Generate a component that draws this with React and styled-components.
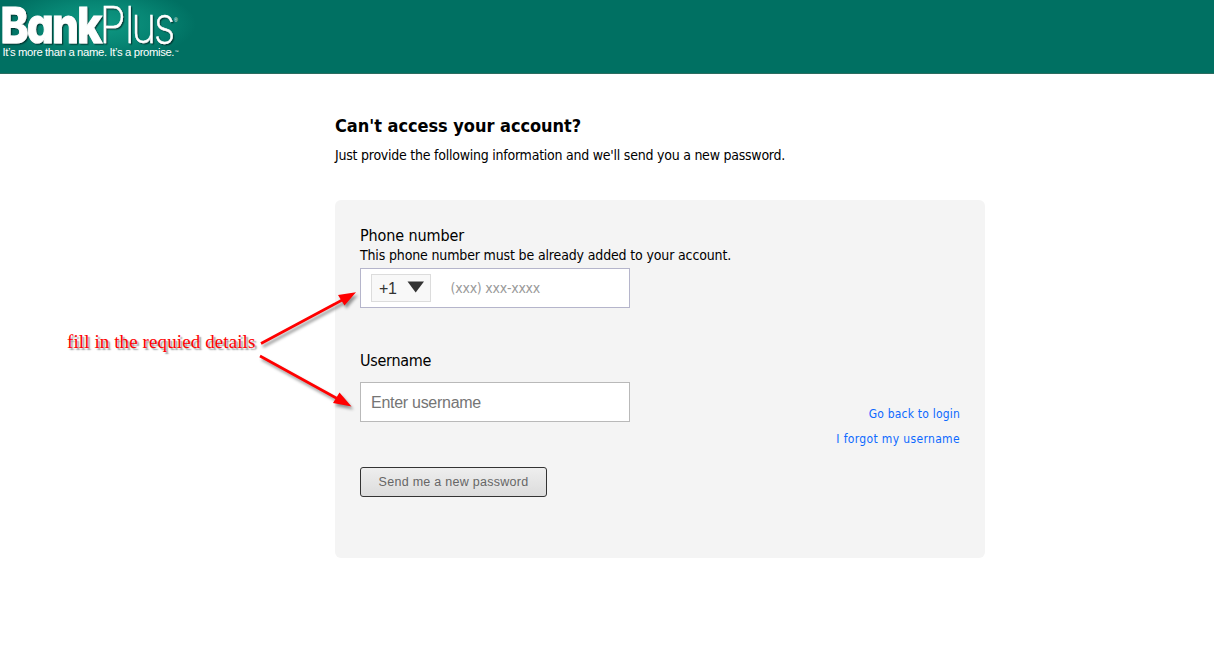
import React from "react";
import styled, { createGlobalStyle } from "styled-components";

const GlobalStyle = createGlobalStyle`
  * { box-sizing: border-box; }
  body { margin: 0; background: #fff; color: #000; font-family: "DejaVu Sans Condensed", "DejaVu Sans", sans-serif; font-stretch: condensed; }
`;

const Page = styled.div`position: relative; height: 666px; overflow: hidden;`;

const Header = styled.header`
  height: 74px;
  background: #007062;
  border-bottom: 1px solid #2b6c60;
`;

const LogoSvg = styled.svg`display: block;`;

const Main = styled.main`width: 650px; margin-left: 335px; padding-top: 41px;`;

const Title = styled.h1`
  margin: 0;
  font-size: 18px;
  line-height: 22px;
  font-weight: bold;
  white-space: nowrap;
  letter-spacing: ${(p) => p.$track || 0}px;
`;

const Text = styled.p`
  margin: 0;
  font-size: 14px;
  line-height: 20px;
  white-space: nowrap;
  letter-spacing: ${(p) => p.$track || 0}px;
`;

const Intro = styled(Text)`margin-top: 8px;`;

const Label = styled(Text)`
  height: 20px;
  font-size: 16px;
  line-height: 22px;
`;

const Panel = styled.section`
  display: flex;
  justify-content: space-between;
  height: 358px;
  margin-top: 35px;
  padding: 25px;
  background: #f4f4f4;
  border-radius: 6px;
`;

const Form = styled.form`display: flex; flex-direction: column; align-items: flex-start;`;

const Field = styled.div`
  display: flex;
  align-items: center;
  width: 270px;
  height: 40px;
  margin-top: ${(p) => p.$gap}px;
  margin-bottom: ${(p) => p.$below}px;
  padding-left: 10px;
  background: #fff;
  border: 1px solid ${(p) => p.$border};
`;

const CodeSelect = styled.div`
  display: flex;
  align-items: center;
  justify-content: space-between;
  width: 60px;
  height: 28px;
  padding: 1px 6px 0 7px;
  background: #f8f8f8;
  border: 1px solid #dcdcdc;
  color: #333;
  font: 16px "Liberation Sans", Arial, sans-serif;
  letter-spacing: -0.3px;
`;

const Caret = styled.svg`display: block; margin-bottom: 3px;`;

const Input = styled.input`
  width: 180px;
  margin-left: ${(p) => p.$left || 0}px;
  padding: ${(p) => p.$drop || 0}px 0 0;
  border: 0;
  outline: 0;
  background: transparent;
  font-family: ${(p) => p.$font};
  font-size: ${(p) => p.$size}px;
  font-stretch: condensed;
  letter-spacing: ${(p) => p.$track || 0}px;
  &::placeholder { color: ${(p) => p.$color}; opacity: 1; }
`;

const Submit = styled.button`
  width: 187px;
  height: 30px;
  padding: 0;
  border: 1px solid #333;
  border-radius: 3px;
  background: linear-gradient(#eee, #dcdcdc);
  color: #666;
  font: 12.500px "Liberation Sans", Arial, sans-serif;
  letter-spacing: 0.27px;
`;

const Links = styled.nav`
  display: flex;
  flex-direction: column;
  align-items: flex-end;
  padding-top: 177px;
`;

const Link = styled.a`
  color: #0c69ff;
  font-size: 12px;
  line-height: 25px;
  white-space: nowrap;
  text-decoration: none;
  letter-spacing: ${(p) => p.$track || 0}px;
`;

const Note = styled.div`
  position: absolute;
  left: 67px;
  top: 331px;
  color: #f00;
  font: 19px/22px "Liberation Serif", "Times New Roman", serif;
  letter-spacing: 0.1px;
  white-space: nowrap;
  text-shadow: 2px 2px 1.5px rgba(0, 0, 0, 0.4);
`;

const Arrows = styled.svg`
  position: absolute;
  left: 250px;
  top: 280px;
  filter: drop-shadow(2px 3px 1.5px rgba(0, 0, 0, 0.4));
`;

function Logo() {
  return (
    <LogoSvg width="200" height="73" viewBox="0 0 200 73" role="img" aria-label="BankPlus">
      <defs>
        <radialGradient id="glow">
          <stop offset="0" stopColor="#0f9a84" />
          <stop offset="0.55" stopColor="#078674" />
          <stop offset="1" stopColor="#007062" />
        </radialGradient>
        <filter id="shade" x="-10%" y="-10%" width="120%" height="130%">
          <feDropShadow dx="1.3" dy="1.3" stdDeviation="0.7" floodColor="#00332b" floodOpacity="0.8" />
        </filter>
      </defs>
      <ellipse cx="98" cy="24" rx="98" ry="38" fill="url(#glow)" />
      <g fill="#fff" fontFamily="Inter, sans-serif" fontSize="50" filter="url(#shade)" style={{ fontFeatureSettings: '"cv11"' }}>
        <text x="0.5" y="43" fontWeight="800" stroke="#fff" strokeWidth="1" letterSpacing="-2" textLength="100" lengthAdjust="spacingAndGlyphs">Bank</text>
        <text transform="translate(0 43) scale(0.85 1)" x="117 147 154.500 181" y="0" fontWeight="200" stroke="#fff" strokeWidth="0.5">Plus</text>
      </g>
      <g fill="#fff" fontFamily="Liberation Sans, sans-serif">
        <text x="174" y="22" fontSize="5">®</text>
        <text x="2.5" y="55.5" fontSize="11.3" textLength="172" lengthAdjust="spacing">It’s more than a name. It’s a promise.</text>
        <text x="174.500" y="53" fontSize="4">™</text>
      </g>
    </LogoSvg>
  );
}

const sans = '"DejaVu Sans Condensed", "DejaVu Sans", sans-serif';
const arial = '"Liberation Sans", Arial, sans-serif';

export default function App() {
  return (
    <Page>
      <GlobalStyle />
      <Header><Logo /></Header>
      <Main>
        <Title $track={-0.03}>Can't access your account?</Title>
        <Intro $track={-0.24}>Just provide the following information and we'll send you a new password.</Intro>
        <Panel>
          <Form>
            <Label $track={-0.1}>Phone number</Label>
            <Text $track={-0.15}>This phone number must be already added to your account.</Text>
            <Field $gap={3} $below={42} $border="#b5b5cb">
              <CodeSelect>
                +1
                <Caret width="17" height="12" viewBox="0 0 17 12"><path d="M0.5 0.5h16.500L8.700 11.5z" fill="#333" /></Caret>
              </CodeSelect>
              <Input $left={20} $font={sans} $size={14} $color="#999" $track={-0.25} placeholder="(xxx) xxx-xxxx" />
            </Field>
            <Label $track={-0.27}>Username</Label>
            <Field $gap={12} $below={45} $border="#b9b9b9">
              <Input $font={arial} $size={16} $color="#757575" $track={-0.28} $drop={2} placeholder="Enter username" />
            </Field>
            <Submit type="button">Send me a new password</Submit>
          </Form>
          <Links>
            <Link $track={0.2}>Go back to login</Link>
            <Link $track={0.35}>I forgot my username</Link>
          </Links>
        </Panel>
      </Main>
      <Note>fill in the requied details</Note>
      <Arrows width="120" height="145" viewBox="250 280 120 145" fill="#f00" stroke="#f00">
        <path d="M261 343.5L345 298.5M260 356L338 399" strokeWidth="2.7" />
        <path d="M356 292.3L338 295L344.5 305.500zM351.500 406.500L339.500 392.500L333 403z" stroke="none" />
      </Arrows>
    </Page>
  );
}
